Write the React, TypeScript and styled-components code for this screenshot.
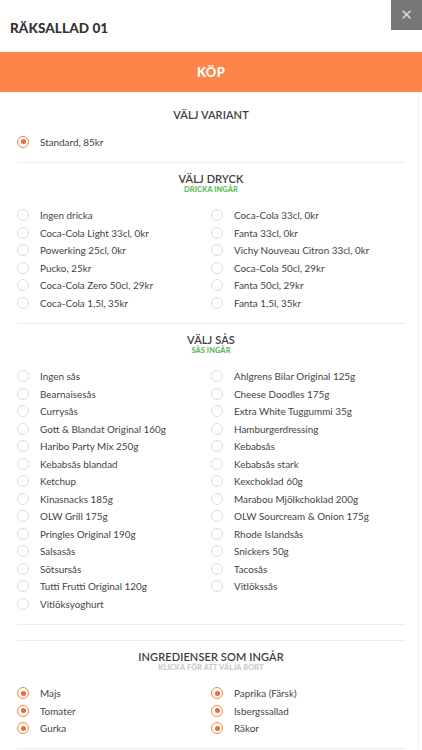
import React from "react";
import styled, { createGlobalStyle } from "styled-components";

const Global = createGlobalStyle`
  html, body { margin: 0; padding: 0; background: #ffffff; }
  body { font-family: Lato, "Open Sans", "Liberation Sans", sans-serif; color: #444; }
  * { box-sizing: border-box; }
`;

const Modal = styled.div`
  position: relative;
  width: 422px;
  background: #fff;
`;

const Header = styled.div`
  height: 52px;
  display: flex;
  align-items: center;
  padding: 4px 0 0 10px;
`;

const Title = styled.h1`
  margin: 0;
  font-size: 13.5px;
  font-weight: 900;
  color: #333;
  letter-spacing: 0.1px;
`;

const Close = styled.button`
  position: absolute;
  top: 0;
  right: 0;
  width: 31px;
  height: 30px;
  border: none;
  padding: 0;
  background: #767676;
  color: #d8d8d8;
  font-family: "DejaVu Sans", sans-serif;
  font-size: 15px;
  line-height: 30px;
  text-align: center;
`;

const BuyButton = styled.div`
  height: 40px;
  background: #fd854a;
  color: #fff;
  font-weight: 900;
  font-size: 13px;
  display: flex;
  align-items: center;
  justify-content: center;
  letter-spacing: 0.3px;
`;

const Body = styled.div`
  width: 419px;
  border-right: 1px solid #efefef;
  padding: 7px 13px 0 17px;
`;

const Section = styled.section<{ $empty?: boolean }>`
  border-bottom: 1px solid #ececec;
  padding: ${(p) => (p.$empty ? "15px 0 0" : "9px 0 11px")};
`;

const SectionTitle = styled.div`
  text-align: center;
  font-size: 11px;
  line-height: 13px;
  font-weight: 600;
  color: #3d3d3d;
  letter-spacing: 0.1px;
`;

const SubTitle = styled.div<{ $tone: "green" | "gray" }>`
  text-align: center;
  font-size: 7.4px;
  line-height: 10px;
  font-weight: 900;
  color: ${(p) => (p.$tone === "green" ? "#5cbd55" : "#c9c9c9")};
  letter-spacing: 0.1px;
`;

const List = styled.div<{ $cols: number }>`
  margin-top: 12px;
  display: grid;
  grid-template-columns: ${(p) => (p.$cols === 2 ? "194px 1fr" : "1fr")};
`;

const Option = styled.label`
  height: 17.5px;
  display: flex;
  align-items: center;
  gap: 11px;
  font-size: 9.9px;
  color: #444;
  white-space: nowrap;
`;

const Radio = styled.span<{ $checked?: boolean }>`
  width: 12px;
  height: 12px;
  border-radius: 50%;
  flex: none;
  border: ${(p) => (p.$checked ? "1.5px solid #f4844b" : "1px solid #dcdcdc")};
  display: flex;
  align-items: center;
  justify-content: center;
  &::after {
    content: "";
    width: 5px;
    height: 5px;
    border-radius: 50%;
    background: ${(p) => (p.$checked ? "#ef6a2c" : "transparent")};
  }
`;

type Sec = {
  title: string;
  sub?: { text: string; tone: "green" | "gray" };
  cols: number;
  checked?: boolean;
  items: string[];
};

const sections: Sec[] = [
  { title: "VÄLJ VARIANT", cols: 1, checked: true, items: ["Standard, 85kr"] },
  {
    title: "VÄLJ DRYCK",
    sub: { text: "DRICKA INGÅR", tone: "green" },
    cols: 2,
    items: [
      "Ingen dricka",
      "Coca-Cola 33cl, 0kr",
      "Coca-Cola Light 33cl, 0kr",
      "Fanta 33cl, 0kr",
      "Powerking 25cl, 0kr",
      "Vichy Nouveau Citron 33cl, 0kr",
      "Pucko, 25kr",
      "Coca-Cola 50cl, 29kr",
      "Coca-Cola Zero 50cl, 29kr",
      "Fanta 50cl, 29kr",
      "Coca-Cola 1,5l, 35kr",
      "Fanta 1,5l, 35kr",
    ],
  },
  {
    title: "VÄLJ SÅS",
    sub: { text: "SÅS INGÅR", tone: "green" },
    cols: 2,
    items: [
      "Ingen sås",
      "Ahlgrens Bilar Original 125g",
      "Bearnaisesås",
      "Cheese Doodles 175g",
      "Currysås",
      "Extra White Tuggummi 35g",
      "Gott & Blandat Original 160g",
      "Hamburgerdressing",
      "Haribo Party Mix 250g",
      "Kebabsås",
      "Kebabsås blandad",
      "Kebabsås stark",
      "Ketchup",
      "Kexchoklad 60g",
      "Kinasnacks 185g",
      "Marabou Mjölkchoklad 200g",
      "OLW Grill 175g",
      "OLW Sourcream & Onion 175g",
      "Pringles Original 190g",
      "Rhode Islandsås",
      "Salsasås",
      "Snickers 50g",
      "Sötsursås",
      "Tacosås",
      "Tutti Frutti Original 120g",
      "Vitlökssås",
      "Vitlöksyoghurt",
    ],
  },
];

const ingredients = ["Majs", "Paprika (Färsk)", "Tomater", "Isbergssallad", "Gurka", "Räkor"];

export default function App() {
  return (
    <Modal>
      <Global />
      <Header>
        <Title>RÄKSALLAD 01</Title>
      </Header>
      <Close aria-label="Stäng">✕</Close>
      <BuyButton>KÖP</BuyButton>
      <Body>
        {sections.map((s) => (
          <Section key={s.title}>
            <SectionTitle>{s.title}</SectionTitle>
            {s.sub && <SubTitle $tone={s.sub.tone}>{s.sub.text}</SubTitle>}
            <List $cols={s.cols}>
              {s.items.map((it) => (
                <Option key={it}>
                  <Radio $checked={s.checked} />
                  {it}
                </Option>
              ))}
            </List>
          </Section>
        ))}
        <Section $empty />
        <Section>
          <SectionTitle>INGREDIENSER SOM INGÅR</SectionTitle>
          <SubTitle $tone="gray">KLICKA FÖR ATT VÄLJA BORT</SubTitle>
          <List $cols={2}>
            {ingredients.map((it) => (
              <Option key={it}>
                <Radio $checked />
                {it}
              </Option>
            ))}
          </List>
        </Section>
      </Body>
    </Modal>
  );
}
